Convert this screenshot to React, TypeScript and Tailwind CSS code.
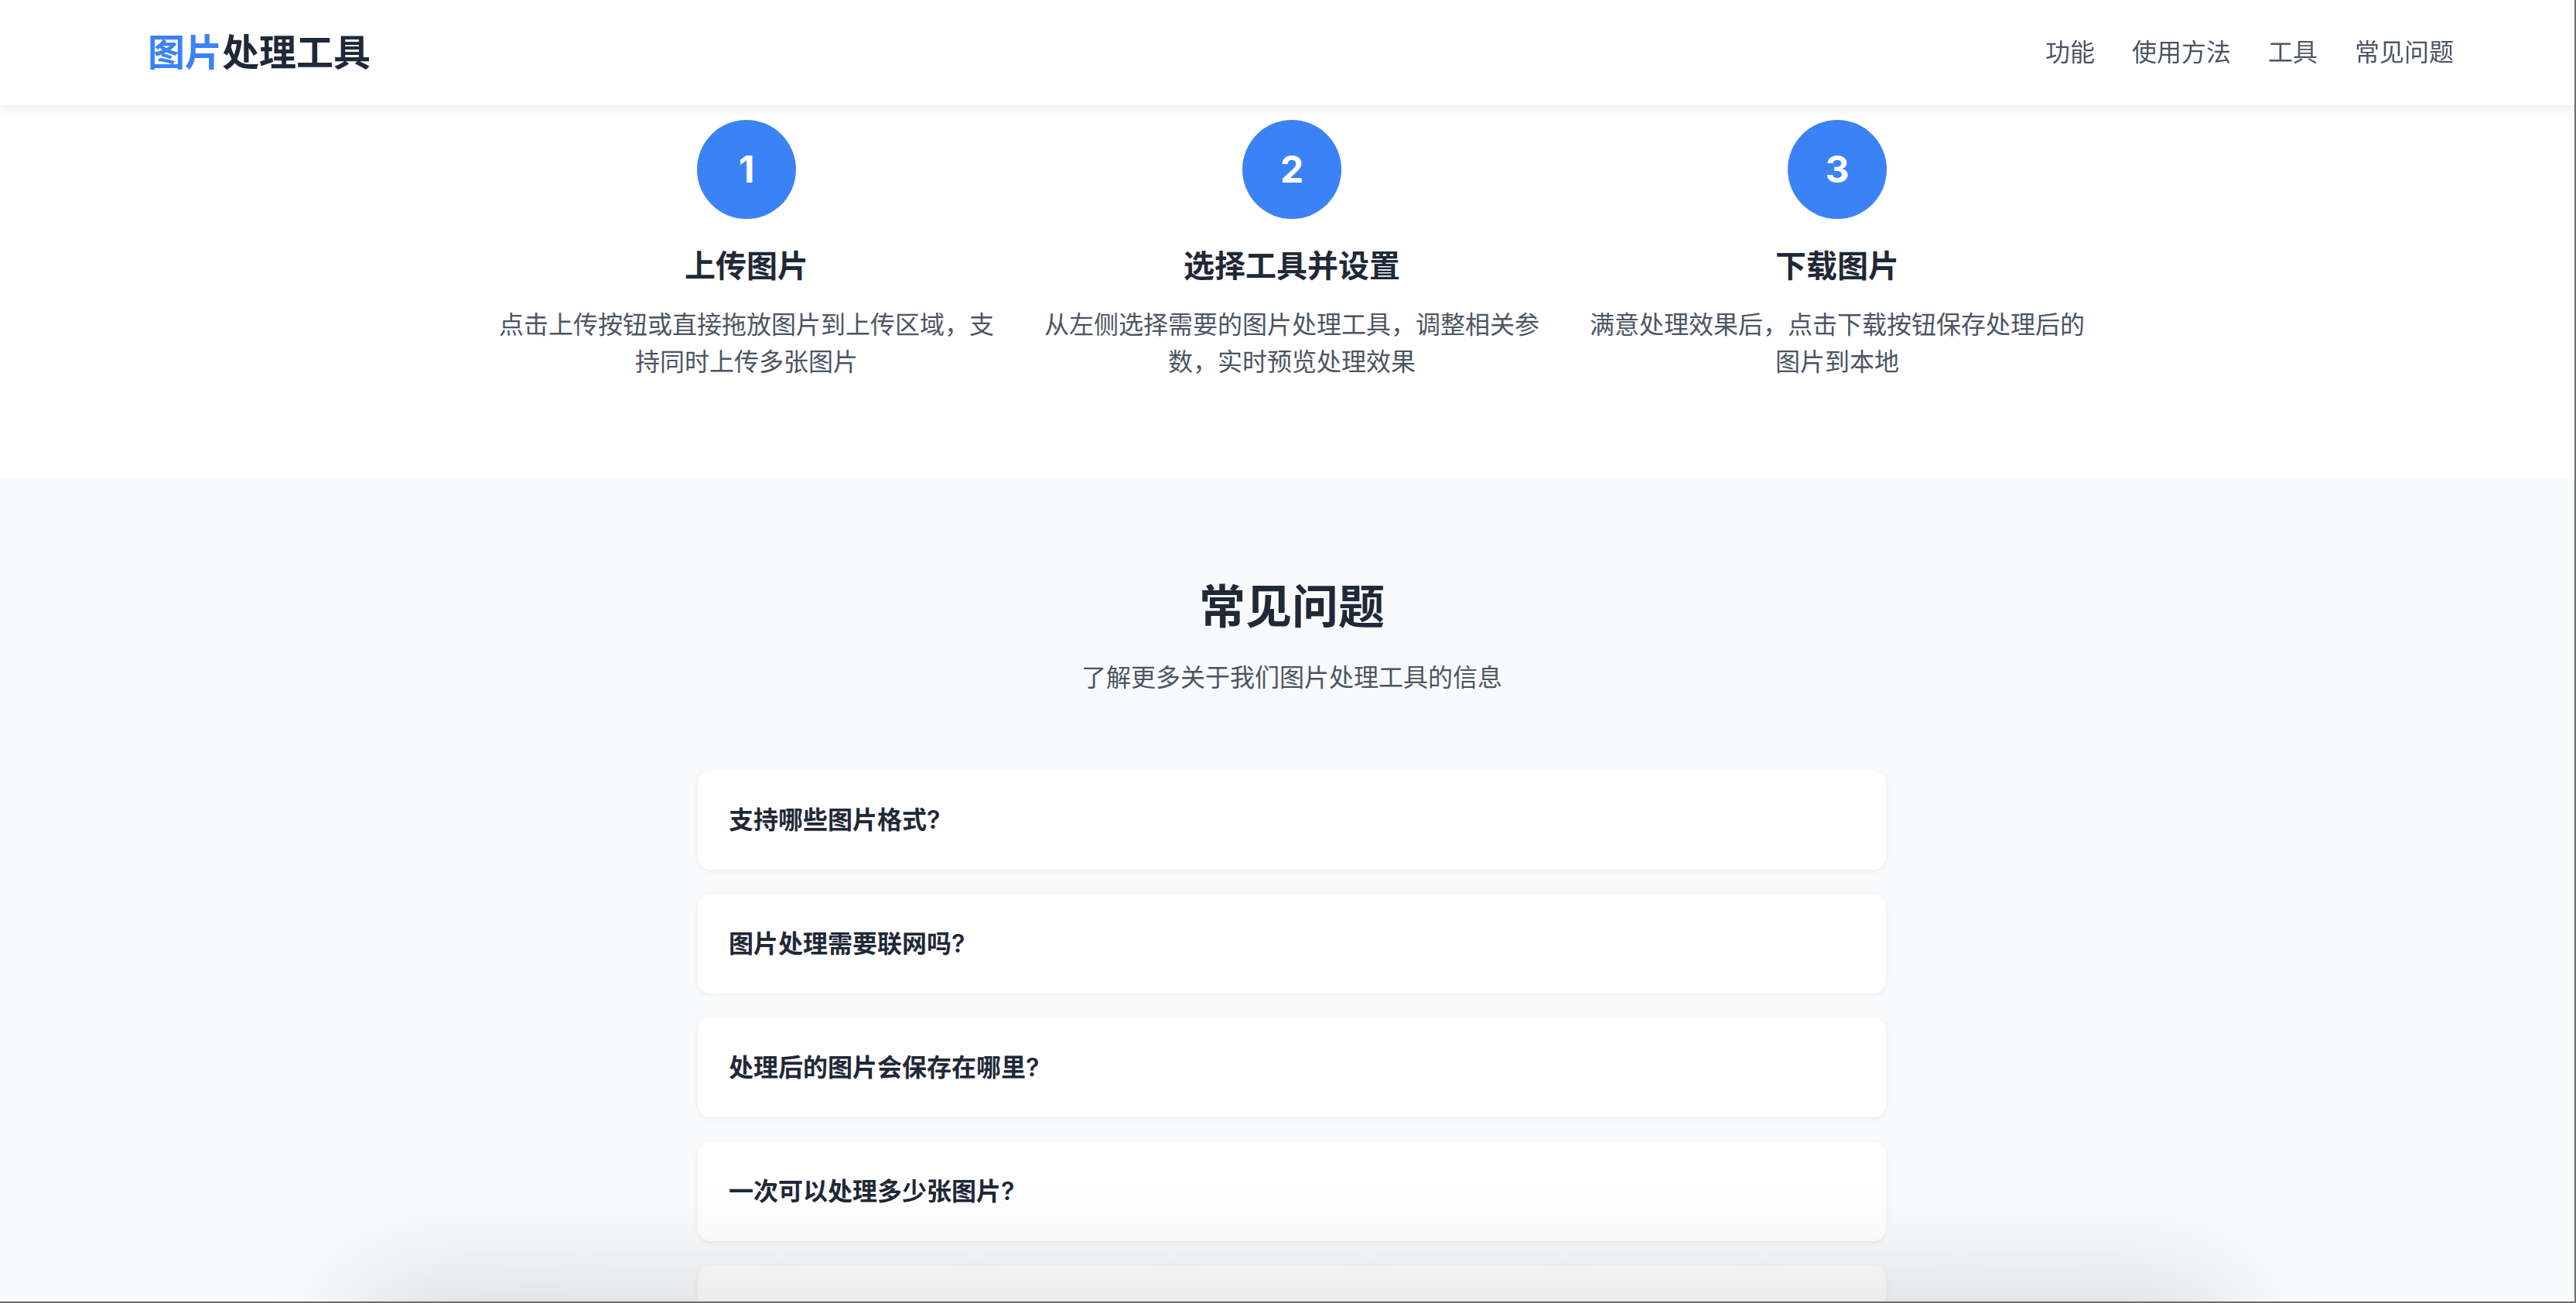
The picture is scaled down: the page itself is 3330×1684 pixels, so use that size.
import React from 'react';

const steps = [
  { n: 1, title: '上传图片', desc: '点击上传按钮或直接拖放图片到上传区域，支持同时上传多张图片' },
  { n: 2, title: '选择工具并设置', desc: '从左侧选择需要的图片处理工具，调整相关参数，实时预览处理效果' },
  { n: 3, title: '下载图片', desc: '满意处理效果后，点击下载按钮保存处理后的图片到本地' }
];

const faqs = [
  '支持哪些图片格式?',
  '图片处理需要联网吗?',
  '处理后的图片会保存在哪里?',
  '一次可以处理多少张图片?',
  '处理后的图片质量会下降吗?'
];

const navItems = ['功能', '使用方法', '工具', '常见问题'];

const App: React.FC = () => {
  return (
    <div className="h-screen overflow-hidden bg-[#f9fafb] font-['Inter','Noto_Sans_CJK_SC',sans-serif]">
      {/* Header */}
      <header className="fixed top-0 inset-x-0 z-20 h-[136px] bg-white shadow-[0_4px_14px_rgba(0,0,0,0.09)]">
        <div className="h-full flex items-center justify-between pl-[191px] pr-[158px]">
          <div className="text-[48px] leading-[64px] font-bold text-[#1f2937]">
            <span className="text-[#3b82f6]">图片</span>处理工具
          </div>
          <nav className="flex items-center gap-[48px] text-[32px] leading-[48px] text-[#4b5563]">
            {navItems.map((item) => (
              <a key={item} href="#" className="hover:text-[#3b82f6]">
                {item}
              </a>
            ))}
          </nav>
        </div>
      </header>

      {/* How to use */}
      <section className="bg-white pt-[155px] pb-[127px] pl-[10px]">
        <div className="mx-auto w-[2070px] grid grid-cols-3 gap-x-[45px]">
          {steps.map((step) => (
            <div key={step.n} className="flex flex-col items-center text-center">
              <div className="w-[128px] h-[128px] rounded-full bg-[#3b82f6] text-white text-[48px] font-bold flex items-center justify-center">
                {step.n}
              </div>
              <h3 className="mt-[33px] text-[40px] leading-[56px] font-bold text-[#1f2937]">{step.title}</h3>
              <p className="mt-[24px] text-[32px] leading-[48px] text-[#4b5563]">{step.desc}</p>
            </div>
          ))}
        </div>
      </section>

      {/* FAQ */}
      <section className="bg-[#f9fafb] pt-[129px] pl-[10px]">
        <h2 className="text-center text-[60px] leading-[72px] font-bold text-[#1f2937]">常见问题</h2>
        <p className="mt-[32px] text-center text-[32px] leading-[48px] text-[#4b5563]">了解更多关于我们图片处理工具的信息</p>
        <div className="mt-[96px] mx-auto w-[1536px] flex flex-col gap-[32px]">
          {faqs.map((q) => (
            <div key={q} className="bg-white rounded-[16px] px-[40px] py-[40px] shadow-[0_2px_6px_rgba(0,0,0,0.06)]">
              <span className="text-[32px] leading-[48px] font-semibold text-[#1f2937]">{q}</span>
            </div>
          ))}
        </div>
      </section>

      {/* shadow of an element just below the fold */}
      <div className="fixed z-10 top-[1684px] left-[480px] right-[470px] h-[200px] rounded-[60px] bg-white shadow-[0_0_130px_40px_rgba(0,0,0,0.11)] pointer-events-none" />

      {/* window frame */}
      <div className="fixed inset-0 z-30 border-r-2 border-b-2 border-[#6e6e6e] pointer-events-none" />
    </div>
  );
};

export default App;
